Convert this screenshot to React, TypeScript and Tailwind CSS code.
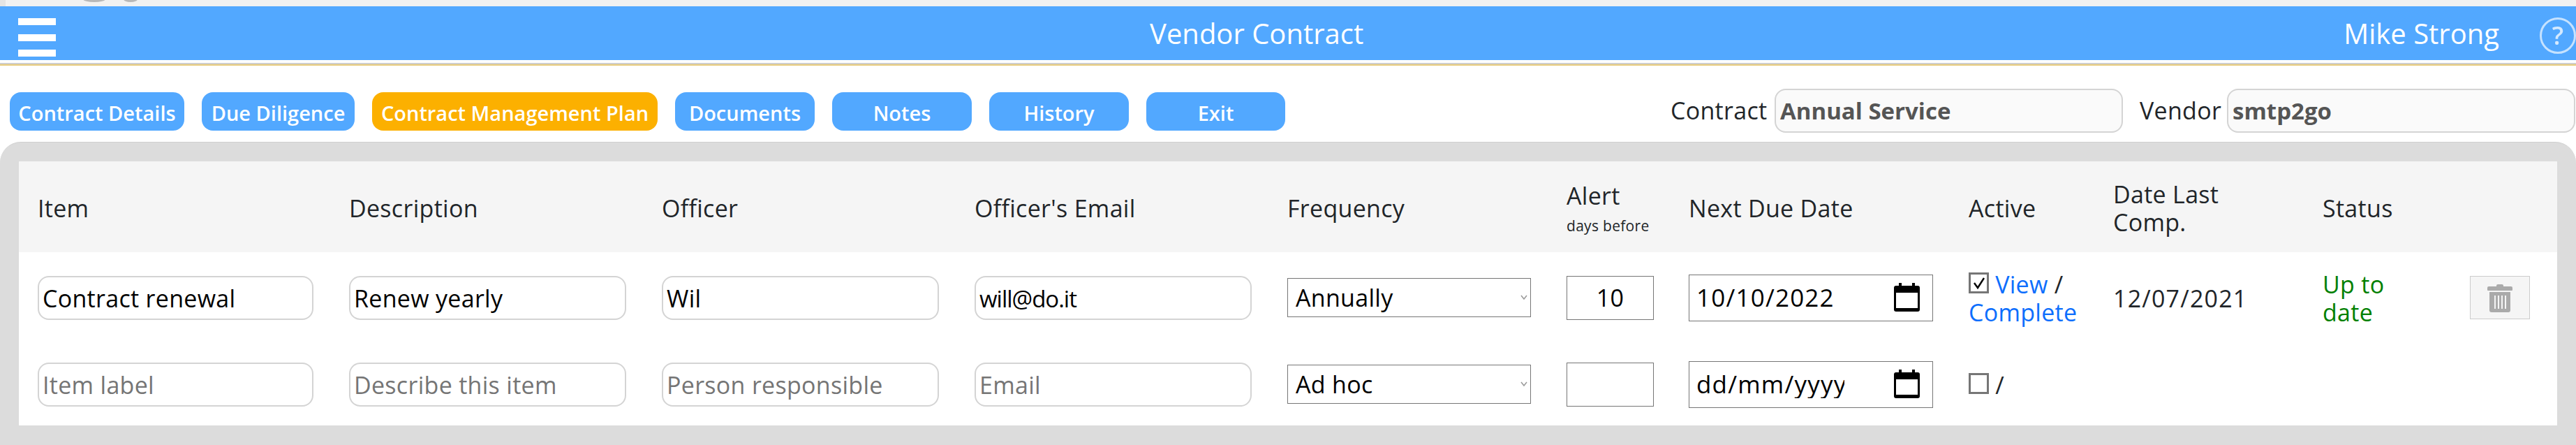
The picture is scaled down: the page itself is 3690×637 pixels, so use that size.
const F = "[font-family:'Open_Sans',sans-serif]";

function CalendarIcon() {
  return (
    <svg viewBox="0 0 37 42" className="w-[37px] h-[42px] shrink-0" fill="none">
      <rect x="7" y="0" width="4" height="8" fill="#000" />
      <rect x="26" y="0" width="4" height="8" fill="#000" />
      <path d="M3 4h31a3 3 0 0 1 3 3v31a3 3 0 0 1-3 3H3a3 3 0 0 1-3-3V7a3 3 0 0 1 3-3z" fill="#000" />
      <rect x="3" y="14" width="31" height="22" fill="#fff" />
    </svg>
  );
}

function TrashIcon() {
  return (
    <svg viewBox="0 0 36 41" className="w-[36px] h-[41px]" fill="#aaaaaa">
      <path d="M13 3a2 2 0 0 1 2-2h6a2 2 0 0 1 2 2v1h11a2 2 0 0 1 2 2v3a1 1 0 0 1-1 1H1a1 1 0 0 1-1-1V6a2 2 0 0 1 2-2h11z" />
      <path d="M3 12h30v26a3 3 0 0 1-3 3H6a3 3 0 0 1-3-3z" />
      <g fill="#f5f5f5">
        <rect x="10" y="17" width="2" height="19" />
        <rect x="15" y="17" width="2" height="19" />
        <rect x="20" y="17" width="2" height="19" />
        <rect x="25" y="17" width="2" height="19" />
      </g>
    </svg>
  );
}

function Nav({ label, active, w }: { label: string; active?: boolean; w: string }) {
  return (
    <button className={`${w} h-[55px] pt-[3px] rounded-[16px] text-white font-semibold text-[29px] leading-none ${active ? 'bg-[#fcb000]' : 'bg-[#52a8ff]'}`}>
      {label}
    </button>
  );
}

function TextInput({ value, placeholder, w = 'w-[397px]', narrow }: { value?: string; placeholder?: string; w?: string; narrow?: boolean }) {
  return (
    <input
      readOnly
      value={value ?? ''}
      placeholder={placeholder}
      className={`${w} h-[63px] rounded-[16px] border-2 border-[#d4d4d4] bg-white pl-[5px] pr-[5px] pt-[2px] ${narrow ? 'text-[33px] tracking-[-1px]' : 'text-[34px] tracking-[0.3px]'} text-black placeholder:text-[#757575] outline-none`}
    />
  );
}

function Select({ value }: { value: string }) {
  return (
    <div className="w-[349px] h-[56px] border border-[#767676] bg-white flex items-center justify-between pl-[11px] pr-[4px] text-[34px] text-black">
      <span>{value}</span>
      <svg viewBox="0 0 10 8" className="w-[10px] h-[8px]" fill="none" stroke="#999" strokeWidth="1.5">
        <path d="M1 1l4 5 4-5" />
      </svg>
    </div>
  );
}

function DateField({ value, clip }: { value: string; clip?: boolean }) {
  return (
    <div className="w-[350px] h-[67px] border border-[#767676] bg-white flex items-center justify-between pl-[10px] pr-[18px] text-[35px] [font-stretch:100%] tracking-[1.2px] text-black">
      <span className={`block overflow-hidden whitespace-nowrap ${clip ? 'w-[212px]' : ''}`}>{value}</span>
      <CalendarIcon />
    </div>
  );
}

function Check({ checked }: { checked?: boolean }) {
  return (
    <span className="inline-block overflow-hidden align-baseline w-[29px] h-[30px] border-[3px] border-[#767676] bg-white">
      {checked && (
        <svg viewBox="0 0 20 20" className="block w-[20px] h-[20px] mx-auto mt-[2px]" fill="none" stroke="#000" strokeWidth="2.4">
          <path d="M3 10l5 7L17 3" />
        </svg>
      )}
    </span>
  );
}

const headers: [string, string][] = [
  ['Item', 'w-[446px]'],
  ['Description', 'w-[448px]'],
  ['Officer', 'w-[448px]'],
  ["Officer's Email", 'w-[448px]'],
  ['Frequency', 'w-[400px]'],
];

export default function App() {
  return (
    <div className={`${F} [font-stretch:96%] w-[3690px] h-[637px] overflow-hidden bg-white text-[#212529] flex flex-col`}>
      <div className="h-[9px] bg-[#f1f1f1] overflow-hidden">
        <svg viewBox="0 0 300 9" className="block w-[300px] h-[9px]">
          <rect x="0" y="0" width="8" height="9" fill="#e4e4e4" />
          <ellipse cx="135" cy="-1" rx="16" ry="4" fill="#a0a0a0" opacity="0.7" />
          <ellipse cx="187" cy="-1" rx="10" ry="4" fill="#a0a0a0" opacity="0.7" />
        </svg>
      </div>
      <header className="h-[77px] bg-[#52a8ff] flex items-center text-white">
        <div className="ml-[26px] self-start mt-[17px] w-[60px] h-[55px] flex flex-col justify-between blur-[0.7px]">
          <span className="block h-[10px] bg-white" />
          <span className="block h-[10px] bg-white" />
          <span className="block h-[10px] bg-white" />
        </div>
        <div className="ml-[1567px] w-[307px] text-[40px] whitespace-nowrap text-center">Vendor Contract</div>
        <div className="ml-[1404px] w-[226px] text-[40px] whitespace-nowrap">Mike Strong</div>
        <div className="ml-[58px] mt-[7px] w-[52px] h-[52px] shrink-0 rounded-full border-[3px] border-[#c5e2ff] flex items-center justify-center text-[#d5eaff] text-[36px] leading-none font-semibold blur-[0.5px]">?</div>
      </header>
      <div className="h-[4px]" />
      <div className="h-[2px] bg-[#cfcfcf]" />
      <div className="h-[2px] bg-[#e8cb7c]" />
      <div className="h-[109px] flex items-start pl-[14px]">
        <div className="flex gap-[25px] mt-[38px]">
          <Nav label="Contract Details" w="w-[250px]" />
          <Nav label="Due Diligence" w="w-[219px]" />
          <Nav label="Contract Management Plan" active w="w-[409px]" />
          <Nav label="Documents" w="w-[200px]" />
          <Nav label="Notes" w="w-[200px]" />
          <Nav label="History" w="w-[200px]" />
          <Nav label="Exit" w="w-[199px]" />
        </div>
        <div className="ml-[552px] mt-[33px] flex items-center text-[34px] tracking-[0.3px]">
          <span className="w-[149px]">Contract</span>
          <div className="w-[499px] h-[63px] rounded-[16px] border-2 border-[#d4d4d4] bg-[#fafafa] flex items-center pl-[6px] font-bold text-[#555] text-[33px] tracking-normal">Annual Service</div>
          <span className="ml-[24px] w-[125px]">Vendor</span>
          <div className="w-[499px] h-[63px] rounded-[16px] border-2 border-[#d4d4d4] bg-[#fafafa] flex items-center pl-[6px] font-bold text-[#555] text-[33px] tracking-normal">smtp2go</div>
        </div>
      </div>
      <main className="flex-1 bg-[#dcdcdc] rounded-t-[30px] border-t border-[#d0d0d0] pt-[27px] px-[27px]">
        <div className="bg-white h-[378px] text-[34px] tracking-[0.3px]">
          <div className="h-[130px] bg-[#f5f5f5] pl-[27px] pt-[3px] flex items-center leading-[40px]">
            {headers.map(([h, w]) => (
              <div key={h} className={w}>{h}</div>
            ))}
            <div className="w-[175px]">
              <div>Alert</div>
              <div className="text-[21px] leading-[24px] mt-[11px]">days before</div>
            </div>
            <div className="w-[401px]">Next Due Date</div>
            <div className="w-[207px]">Active</div>
            <div className="w-[300px]">Date Last<br />Comp.</div>
            <div>Status</div>
          </div>
          <div className="h-[128px] pl-[27px] pt-[2px] flex items-center leading-[40px]">
            <div className="w-[446px]"><TextInput value="Contract renewal" w="w-[395px]" /></div>
            <div className="w-[448px]"><TextInput value="Renew yearly" /></div>
            <div className="w-[448px]"><TextInput value="Wil" /></div>
            <div className="w-[448px]"><TextInput value="will@do.it" narrow /></div>
            <div className="w-[400px]"><Select value="Annually" /></div>
            <div className="w-[175px]">
              <div className="w-[125px] h-[63px] border border-[#767676] flex items-center justify-center text-black [font-stretch:100%]">10</div>
            </div>
            <div className="w-[401px]"><DateField value="10/10/2022" /></div>
            <div className="w-[207px] pt-[2px]">
              <Check checked /> <a className="text-[#0d6efd]">View</a> /<br />
              <a className="text-[#0d6efd]">Complete</a>
            </div>
            <div className="w-[300px] pt-[2px] [font-stretch:100%] tracking-[1.2px]">12/07/2021</div>
            <div className="w-[211px] pt-[2px] text-[#008000]">Up to<br />date</div>
            <div className="w-[86px] h-[62px] bg-[#f5f5f5] border border-[#cccccc] flex items-center justify-center"><TrashIcon /></div>
          </div>
          <div className="h-[120px] pl-[27px] pt-[2px] flex items-center leading-[40px]">
            <div className="w-[446px]"><TextInput placeholder="Item label" w="w-[395px]" /></div>
            <div className="w-[448px]"><TextInput placeholder="Describe this item" /></div>
            <div className="w-[448px]"><TextInput placeholder="Person responsible" /></div>
            <div className="w-[448px]"><TextInput placeholder="Email" /></div>
            <div className="w-[400px]"><Select value="Ad hoc" /></div>
            <div className="w-[175px]"><div className="w-[125px] h-[63px] border border-[#767676]" /></div>
            <div className="w-[401px]"><DateField value="dd/mm/yyyy" clip /></div>
            <div className="w-[207px] pt-[2px]"><Check /> /</div>
          </div>
        </div>
      </main>
    </div>
  );
}
